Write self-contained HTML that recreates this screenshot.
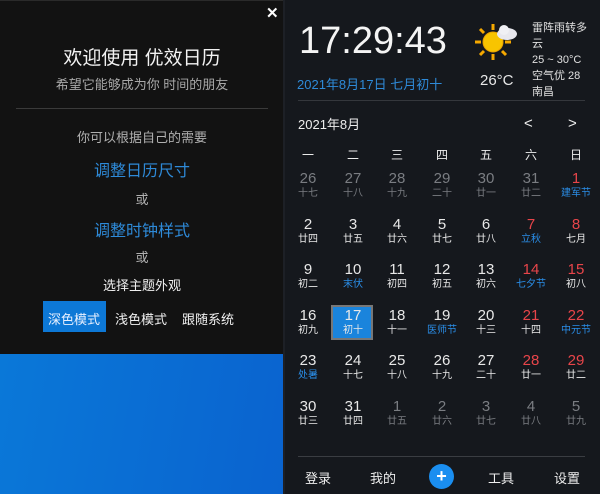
<!DOCTYPE html>
<html><head><meta charset="utf-8"><style>
*{margin:0;padding:0;box-sizing:border-box}
body{width:600px;height:494px;overflow:hidden;background:#15181d;font-family:"Liberation Sans","Noto Sans CJK SC",sans-serif;position:relative;color:#e8e8e8}
.a{position:absolute;white-space:nowrap}
.c{transform:translateX(-50%);text-align:center}
#left{position:absolute;left:0;top:0;width:283px;height:354px;background:#121212;border-top:1px solid #2a2a2a}
#blue{position:absolute;left:0;top:354px;width:283px;height:140px;background:linear-gradient(100deg,#0a78d8,#0a63cf)}
#sep{position:absolute;left:283px;top:0;width:2px;height:494px;background:#1d2026}
.d{position:absolute;width:44px;text-align:center;transform:translateX(-50%)}
.n{font-size:15px;line-height:16px}
.l{font-size:10px;line-height:12px;margin-top:1px}
.g{color:#7a7d82}.r{color:#e8454a}.b{color:#2a8ee8}
</style></head><body>
<div id="left"></div><div id="blue"></div><div id="sep"></div>
<div class="a" style="left:266px;top:4px;font-size:15px;color:#fff;font-weight:bold">✕</div>
<div class="a c" style="left:142px;top:43px;font-size:19px;color:#f2f2f2">欢迎使用 优效日历</div>
<div class="a c" style="left:142px;top:74px;font-size:13px;color:#a8a8a8">希望它能够成为你 时间的朋友</div>
<div class="a" style="left:16px;top:108px;width:252px;height:1px;background:#3a3a3a"></div>
<div class="a c" style="left:142px;top:127px;font-size:13px;color:#b0b0b0">你可以根据自己的需要</div>
<div class="a c" style="left:142px;top:157px;font-size:16px;color:#2e8ad8">调整日历尺寸</div>
<div class="a c" style="left:142px;top:189px;font-size:13px;color:#b0b0b0">或</div>
<div class="a c" style="left:142px;top:217px;font-size:16px;color:#2e8ad8">调整时钟样式</div>
<div class="a c" style="left:142px;top:247px;font-size:13px;color:#b0b0b0">或</div>
<div class="a c" style="left:142px;top:275px;font-size:13px;color:#f0f0f0">选择主题外观</div>
<div class="a" style="left:43px;top:301px;width:63px;height:31px;background:#0d78d6"></div>
<div class="a" style="left:48px;top:309px;font-size:13px;color:#e8f0ff">深色模式</div>
<div class="a" style="left:115px;top:309px;font-size:13px;color:#f0f0f0">浅色模式</div>
<div class="a" style="left:182px;top:309px;font-size:13px;color:#f0f0f0">跟随系统</div>

<div class="a" style="left:299px;top:20px;font-size:38px;color:#f4f4f4;font-weight:300">17:29:43</div>
<svg class="a" style="left:474px;top:22px" width="46" height="42" viewBox="0 0 46 42">
<g stroke="#f5a800" stroke-width="3"><line x1="19" y1="2" x2="19" y2="8"/><line x1="19" y1="32" x2="19" y2="38"/><line x1="1" y1="20" x2="7" y2="20"/><line x1="31" y1="20" x2="37" y2="20"/><line x1="6" y1="7" x2="10" y2="11"/><line x1="28" y1="29" x2="32" y2="33"/><line x1="6" y1="33" x2="10" y2="29"/></g>
<circle cx="19" cy="20" r="10" fill="#f8c400" stroke="#e8a000"/>
<ellipse cx="33" cy="12" rx="10" ry="6" fill="#e8e8ee"/><circle cx="30" cy="8" r="5" fill="#f0f0f4"/></svg>
<div class="a" style="left:532px;top:20px;font-size:11px;line-height:16px;color:#e0e0e0">雷阵雨转多<br>云<br>25 ~ 30°C<br>空气优 28<br>南昌</div>
<div class="a" style="left:297px;top:74px;font-size:13px;color:#2e8ad8">2021年8月17日 七月初十</div>
<div class="a" style="left:480px;top:72px;font-size:15px;color:#e8e8e8">26°C</div>
<div class="a" style="left:298px;top:100px;width:287px;height:1px;background:#34373c"></div>
<div class="a" style="left:298px;top:114px;font-size:13px;color:#eee">2021年8月</div>
<div class="a" style="left:524px;top:115px;font-size:15px;color:#eee">&lt;</div>
<div class="a" style="left:568px;top:115px;font-size:15px;color:#eee">&gt;</div>

<div class="a" style="left:0;top:146px;font-size:12px;color:#eee">
<span class="d" style="left:308px">一</span><span class="d" style="left:353px">二</span><span class="d" style="left:397px">三</span><span class="d" style="left:442px">四</span><span class="d" style="left:486px">五</span><span class="d" style="left:531px">六</span><span class="d" style="left:576px">日</span></div>

<div class="a" style="left:331px;top:305px;width:42px;height:35px;background:#1a84dc;border:2px solid #777"></div>
<div id="cal"></div>
<script>
var cols=[308,353,397,442,486,531,576],tops=[171,217,262,308,353,399];
var rows=[
[["26","十七","g","g"],["27","十八","g","g"],["28","十九","g","g"],["29","二十","g","g"],["30","廿一","g","g"],["31","廿二","g","g"],["1","建军节","r","b"]],
[["2","廿四"],["3","廿五"],["4","廿六"],["5","廿七"],["6","廿八"],["7","立秋","r","b"],["8","七月","r"]],
[["9","初二"],["10","末伏","","b"],["11","初四"],["12","初五"],["13","初六"],["14","七夕节","r","b"],["15","初八","r"]],
[["16","初九"],["17","初十"],["18","十一"],["19","医师节","","b"],["20","十三"],["21","十四","r"],["22","中元节","r","b"]],
[["23","处暑","","b"],["24","十七"],["25","十八"],["26","十九"],["27","二十"],["28","廿一","r"],["29","廿二","r"]],
[["30","廿三"],["31","廿四"],["1","廿五","g","g"],["2","廿六","g","g"],["3","廿七","g","g"],["4","廿八","g","g"],["5","廿九","g","g"]]];
var h="";
rows.forEach(function(r,i){r.forEach(function(c,j){
h+='<div class="d" style="left:'+cols[j]+'px;top:'+tops[i]+'px"><div class="n '+(c[2]||'')+'">'+c[0]+'</div><div class="l '+(c[3]||'')+'">'+c[1]+'</div></div>';});});
document.getElementById("cal").innerHTML=h;
</script>
<div class="a" style="left:298px;top:456px;width:287px;height:1px;background:#3a3d42"></div>
<div class="a c" style="left:318px;top:468px;font-size:13px;color:#eee">登录</div>
<div class="a c" style="left:383px;top:468px;font-size:13px;color:#eee">我的</div>
<div class="a" style="left:429px;top:464px;width:25px;height:25px;border-radius:50%;background:#1a8ef0;color:#fff;font-size:18px;line-height:24px;text-align:center;font-weight:bold">+</div>
<div class="a c" style="left:501px;top:468px;font-size:13px;color:#eee">工具</div>
<div class="a c" style="left:567px;top:468px;font-size:13px;color:#eee">设置</div>
</body></html>
